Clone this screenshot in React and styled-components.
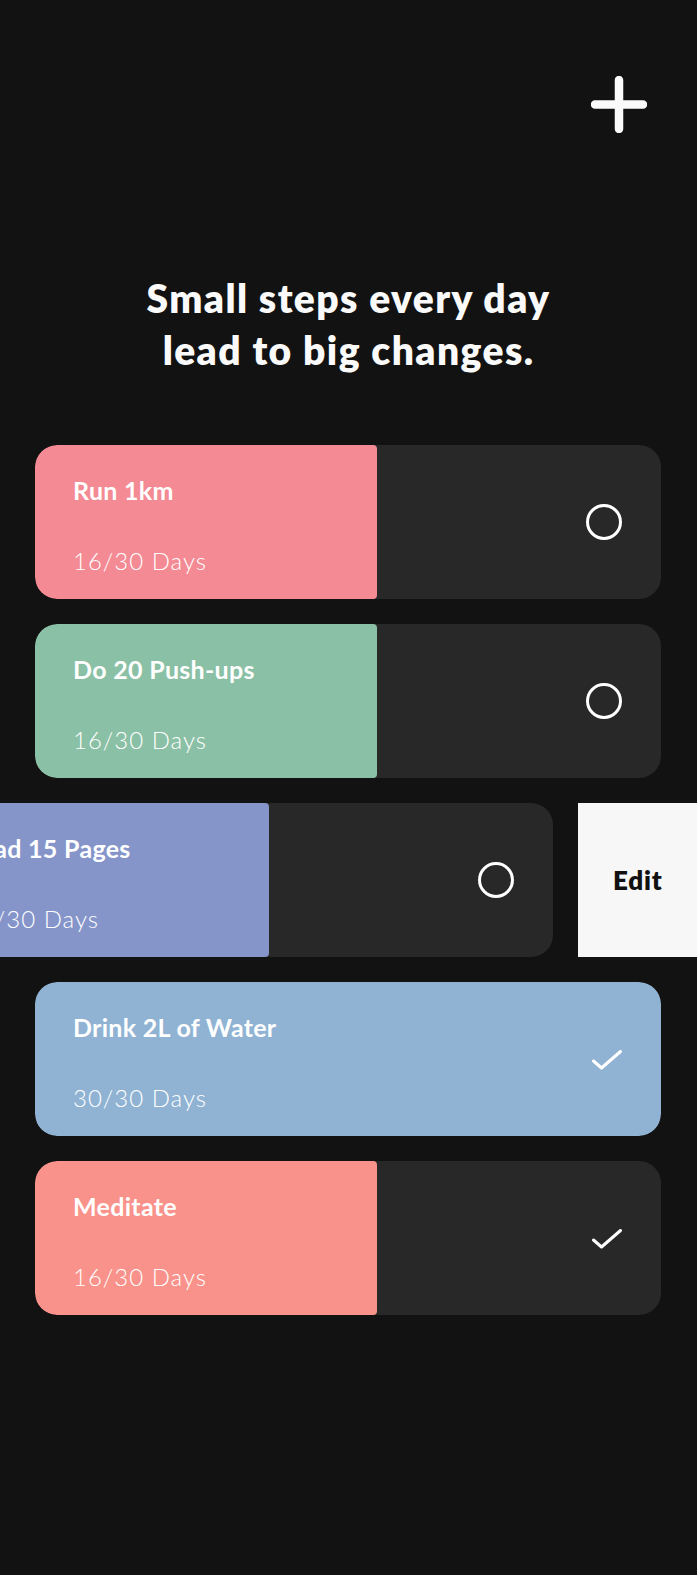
import React from "react";
import styled, { createGlobalStyle } from "styled-components";

const Global = createGlobalStyle`
  html, body { margin: 0; padding: 0; background: #121212; }
  body { font-family: "Lato", "Noto Sans", sans-serif; }
`;

const Page = styled.div`
  width: 697px;
  min-height: 1575px;
  background: #121212;
  overflow-x: hidden;
  box-sizing: border-box;
`;

const TopBar = styled.div`
  display: flex;
  justify-content: flex-end;
  padding: 76px 50px 0 0;
`;

const IconButton = styled.button`
  width: 56px;
  height: 57px;
  padding: 0;
  border: none;
  background: transparent;
  display: flex;
  align-items: center;
  justify-content: center;
  cursor: pointer;
`;

const Heading = styled.h1`
  margin: 139px 0 0;
  text-align: center;
  color: #fafafa;
  font-size: 39px;
  line-height: 52px;
  font-weight: 800;
  letter-spacing: 1.4px;
`;

const List = styled.div`
  display: flex;
  flex-direction: column;
  gap: 25px;
  margin-top: 69px;
  padding: 0 36px 0 35px;
`;

const Row = styled.div`
  display: flex;
  gap: 25px;
  margin-left: ${(p) => (p.$shift ? `-${p.$shift}px` : "0")};
  width: 100%;
`;

const Card = styled.div`
  position: relative;
  flex: 0 0 626px;
  height: 154px;
  border-radius: 22px;
  background: #282828;
  overflow: hidden;
  display: flex;
  align-items: center;
  justify-content: flex-end;
  padding-right: 39px;
  box-sizing: border-box;
`;

const Fill = styled.div`
  position: absolute;
  left: 0;
  top: 0;
  bottom: 0;
  background: ${(p) => p.$color};
  border-radius: 22px ${(p) => (p.$full ? "22px 22px" : "4px 4px")} 22px;
`;

const Info = styled.div`
  position: absolute;
  left: 38px;
  top: 0;
  bottom: 0;
  display: flex;
  flex-direction: column;
  justify-content: space-between;
  padding: 30px 0 23px;
  color: #ffffff;
  white-space: nowrap;
`;

const Title = styled.div`
  font-size: 25px;
  font-weight: 700;
  line-height: 30px;
  letter-spacing: 0.3px;
`;

const Progress = styled.div`
  font-size: 24px;
  font-weight: 300;
  line-height: 30px;
  letter-spacing: 1px;
`;

const Status = styled.div`
  position: relative;
  width: 36px;
  height: 36px;
  display: flex;
  align-items: center;
  justify-content: center;
`;

const EditButton = styled.button`
  flex: 0 0 124px;
  height: 154px;
  border: none;
  background: #f7f7f7;
  color: #111;
  font-family: inherit;
  font-size: 26px;
  font-weight: 800;
  letter-spacing: 0.8px;
  padding: 0 0 0 35px;
  text-align: left;
  cursor: pointer;
`;

const PlusIcon = () => (
  <svg width="56" height="57" viewBox="0 0 56 57">
    <path d="M28 4 V53 M4 28.5 H52" stroke="#fafafa" strokeWidth="8.5" strokeLinecap="round" />
  </svg>
);

const CircleIcon = () => (
  <svg width="36" height="36" viewBox="0 0 36 36">
    <circle cx="18" cy="18" r="16.5" fill="none" stroke="#fff" strokeWidth="3" />
  </svg>
);

const CheckIcon = () => (
  <svg width="36" height="36" viewBox="0 0 36 36">
    <path d="M7.5 20 L15.5 27 L34.5 10.5" fill="none" stroke="#fff" strokeWidth="3" strokeLinecap="round" strokeLinejoin="round" />
  </svg>
);

const habits = [
  { title: "Run 1km", done: 16, color: "#F38A94", checked: false },
  { title: "Do 20 Push-ups", done: 16, color: "#8AC0A5", checked: false },
  { title: "Read 15 Pages", done: 16, color: "#8595CA", checked: false, shift: 108 },
  { title: "Drink 2L of Water", done: 30, color: "#90B3D3", checked: true },
  { title: "Meditate", done: 16, color: "#F9928A", checked: true },
];

export default function App() {
  return (
    <Page>
      <Global />
      <TopBar>
        <IconButton aria-label="Add habit">
          <PlusIcon />
        </IconButton>
      </TopBar>
      <Heading>
        Small steps every day
        <br />
        lead to big changes.
      </Heading>
      <List>
        {habits.map((h) => {
          const full = h.done >= 30;
          const width = full ? "100%" : `${(342 / 626) * 100}%`;
          return (
            <Row key={h.title} $shift={h.shift}>
              <Card>
                <Fill $color={h.color} $full={full} style={{ width }} />
                <Info>
                  <Title>{h.title}</Title>
                  <Progress>{h.done}/30 Days</Progress>
                </Info>
                <Status>{h.checked ? <CheckIcon /> : <CircleIcon />}</Status>
              </Card>
              {h.shift ? <EditButton>Edit</EditButton> : null}
            </Row>
          );
        })}
      </List>
    </Page>
  );
}
